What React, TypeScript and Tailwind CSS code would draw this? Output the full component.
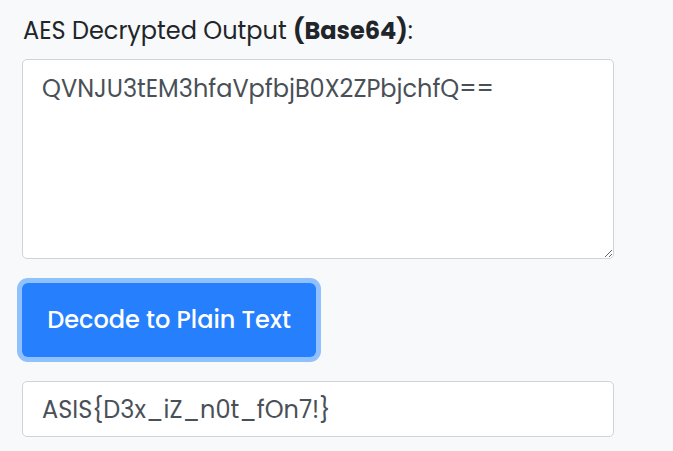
export default function App() {
  return (
    <div
      className="min-h-[451px] bg-[#f8f9fa] pl-[22px] pt-[13px] text-[#212529]"
      style={{ fontFamily: "Poppins, 'Noto Sans', sans-serif" }}
    >
      <label className="block text-[24px] leading-[36px] pl-[1px]">
        AES Decrypted Output <strong className="font-bold">(Base64)</strong>:
      </label>
      <textarea
        readOnly
        className="mt-[10px] block h-[200px] w-[592px] resize-y rounded-[5px] border border-[#ced4da] bg-white px-[19px] py-[11px] text-[24px] leading-[36px] text-[#495057] outline-none"
        value="QVNJU3tEM3hfaVpfbjB0X2ZPbjchfQ=="
      />
      <button className="mt-[24px] block h-[74px] w-[294px] rounded-[6px] bg-[#2680fe] text-[24px] font-medium text-white ring-[5px] ring-[#8fc1ff]">
        Decode to Plain Text
      </button>
      <input
        readOnly
        className="mt-[24px] block h-[56px] w-[592px] rounded-[5px] border border-[#ced4da] bg-white px-[19px] text-[24px] text-[#495057] outline-none"
        value="ASIS{D3x_iZ_n0t_fOn7!}"
      />
    </div>
  );
}
